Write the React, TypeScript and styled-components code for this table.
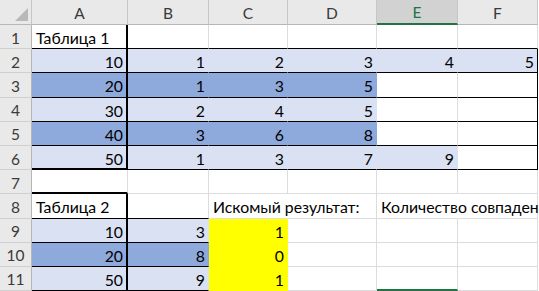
import React from 'react';
import styled, { createGlobalStyle } from 'styled-components';

const GlobalStyle = createGlobalStyle`
  html, body {
    margin: 0;
    padding: 0;
    background: #ffffff;
  }
  body {
    font-family: Lato, 'Liberation Sans', sans-serif;
    overflow: hidden;
  }
`;

type Line = 'grid' | 'thin' | 'thick' | 'none' | 'select';
type Fill = 'light' | 'dark' | 'yellow';

const LINES: Record<Line, string> = {
  grid: '1px solid #dcdcdc',
  thin: '1px solid #000000',
  thick: '2px solid #000000',
  none: '1px solid transparent',
  select: '2px solid #217346',
};

const FILLS: Record<Fill, string> = {
  light: '#d9e1f2',
  dark: '#8ea9db',
  yellow: '#ffff00',
};

const Sheet = styled.div`
  display: grid;
  grid-template-columns: 32px 96px 81px 79px 89px 81px 80px;
  grid-template-rows: 25px repeat(11, 24.2px);
  width: 539px;
  height: 291px;
  overflow: hidden;
  color: #000;
  font-size: 15.8px;
`;

const Corner = styled.div`
  position: relative;
  background: #e9e9e9;
  border-right: 1px solid #c6c6c6;
  border-bottom: 1px solid #b6b6b6;
  box-sizing: border-box;
`;

const CornerMark = styled.div`
  position: absolute;
  right: 3px;
  bottom: 3px;
  width: 0;
  height: 0;
  border-left: 13px solid transparent;
  border-bottom: 13px solid #b9b9b9;
`;

const ColHead = styled.div<{ $active?: boolean }>`
  display: flex;
  align-items: center;
  justify-content: center;
  padding-top: 1px;
  box-sizing: border-box;
  background: ${(p) => (p.$active ? '#d2d2d2' : '#e9e9e9')};
  border-right: 1px solid #c6c6c6;
  border-bottom: ${(p) => (p.$active ? '2px solid #217346' : '1px solid #b6b6b6')};
  color: ${(p) => (p.$active ? '#217346' : '#3a3a3a')};
  font-size: 15.5px;
`;

const RowHead = styled.div`
  display: flex;
  align-items: center;
  justify-content: center;
  padding-top: 2px;
  box-sizing: border-box;
  background: #e9e9e9;
  border-right: 1px solid #b6b6b6;
  border-bottom: 1px solid #d0d0d0;
  color: #3a3a3a;
  font-size: 15.5px;
`;

const Cell = styled.div<{ $fill?: Fill; $align?: 'left' | 'right'; $r: Line; $b: Line; $spill?: boolean }>`
  display: flex;
  align-items: center;
  justify-content: ${(p) => (p.$align === 'left' ? 'flex-start' : 'flex-end')};
  padding: 2px 3px 0 4px;
  box-sizing: border-box;
  min-width: 0;
  white-space: nowrap;
  overflow: ${(p) => (p.$spill ? 'visible' : 'hidden')};
  position: ${(p) => (p.$spill ? 'relative' : 'static')};
  z-index: ${(p) => (p.$spill ? 1 : 'auto')};
  background: ${(p) => (p.$fill ? FILLS[p.$fill] : 'transparent')};
  border-right: ${(p) => LINES[p.$r]};
  border-bottom: ${(p) => LINES[p.$b]};
`;

type Spec = {
  v?: string;
  fill?: Fill;
  align?: 'left' | 'right';
  r?: Line;
  b?: Line;
  spill?: boolean;
};

const L = 'light';
const D = 'dark';
const Y = 'yellow';

// table 1 body rows: A..F, blue bands with a framed key column
const band = (vals: (string | undefined)[], fills: (Fill | undefined)[], last = false): Spec[] =>
  vals.map((v, i) => ({
    v,
    fill: fills[i],
    r: i === 0 ? 'thick' : i === 5 ? 'thin' : fills[i] ? 'none' : 'grid',
    b: last && i === 0 ? 'thick' : 'thin',
  }));

const rows: Spec[][] = [
  [
    { v: 'Таблица 1', align: 'left', r: 'thick', b: 'thin' },
    { b: 'thin' }, { b: 'thin' }, { b: 'thin' }, { b: 'thin' }, { b: 'thin' },
  ],
  band(['10', '1', '2', '3', '4', '5'], [L, L, L, L, L, L]),
  band(['20', '1', '3', '5', undefined, undefined], [D, D, D, D, undefined, undefined]),
  band(['30', '2', '4', '5', undefined, undefined], [L, L, L, L, undefined, undefined]),
  band(['40', '3', '6', '8', undefined, undefined], [D, D, D, D, undefined, undefined]),
  band(['50', '1', '3', '7', '9', undefined], [L, L, L, L, L, undefined], true),
  [{ b: 'thick' }, {}, {}, {}, {}, {}],
  [
    { v: 'Таблица 2', align: 'left', r: 'thick', b: 'thin' },
    { b: 'thin' },
    { v: 'Искомый результат:', align: 'left', r: 'none', spill: true },
    {},
    { v: 'Количество совпадений:', align: 'left', r: 'none', spill: true },
    {},
  ],
  [
    { v: '10', fill: L, r: 'thick', b: 'thin' },
    { v: '3', fill: L, r: 'none', b: 'thin' },
    { v: '1', fill: Y, r: 'none', b: 'none' },
    {}, {}, {},
  ],
  [
    { v: '20', fill: D, r: 'thick', b: 'thin' },
    { v: '8', fill: D, r: 'none', b: 'thin' },
    { v: '0', fill: Y, r: 'none', b: 'none' },
    {}, {}, {},
  ],
  [
    { v: '50', fill: L, r: 'thick', b: 'thin' },
    { v: '9', fill: L, r: 'none', b: 'thin' },
    { v: '1', fill: Y, r: 'none', b: 'none' },
    {}, { b: 'select' }, {},
  ],
];

const COLS = ['A', 'B', 'C', 'D', 'E', 'F'];

export default function App() {
  return (
    <>
      <GlobalStyle />
      <Sheet>
        <Corner>
          <CornerMark />
        </Corner>
        {COLS.map((c) => (
          <ColHead key={c} $active={c === 'E'}>
            {c}
          </ColHead>
        ))}
        {rows.map((row, ri) => (
          <React.Fragment key={ri}>
            <RowHead>{ri + 1}</RowHead>
            {row.map((cell, ci) => (
              <Cell
                key={ci}
                $fill={cell.fill}
                $align={cell.align}
                $r={cell.r ?? 'grid'}
                $b={cell.b ?? 'grid'}
                $spill={cell.spill}
              >
                {cell.v}
              </Cell>
            ))}
          </React.Fragment>
        ))}
      </Sheet>
    </>
  );
}
